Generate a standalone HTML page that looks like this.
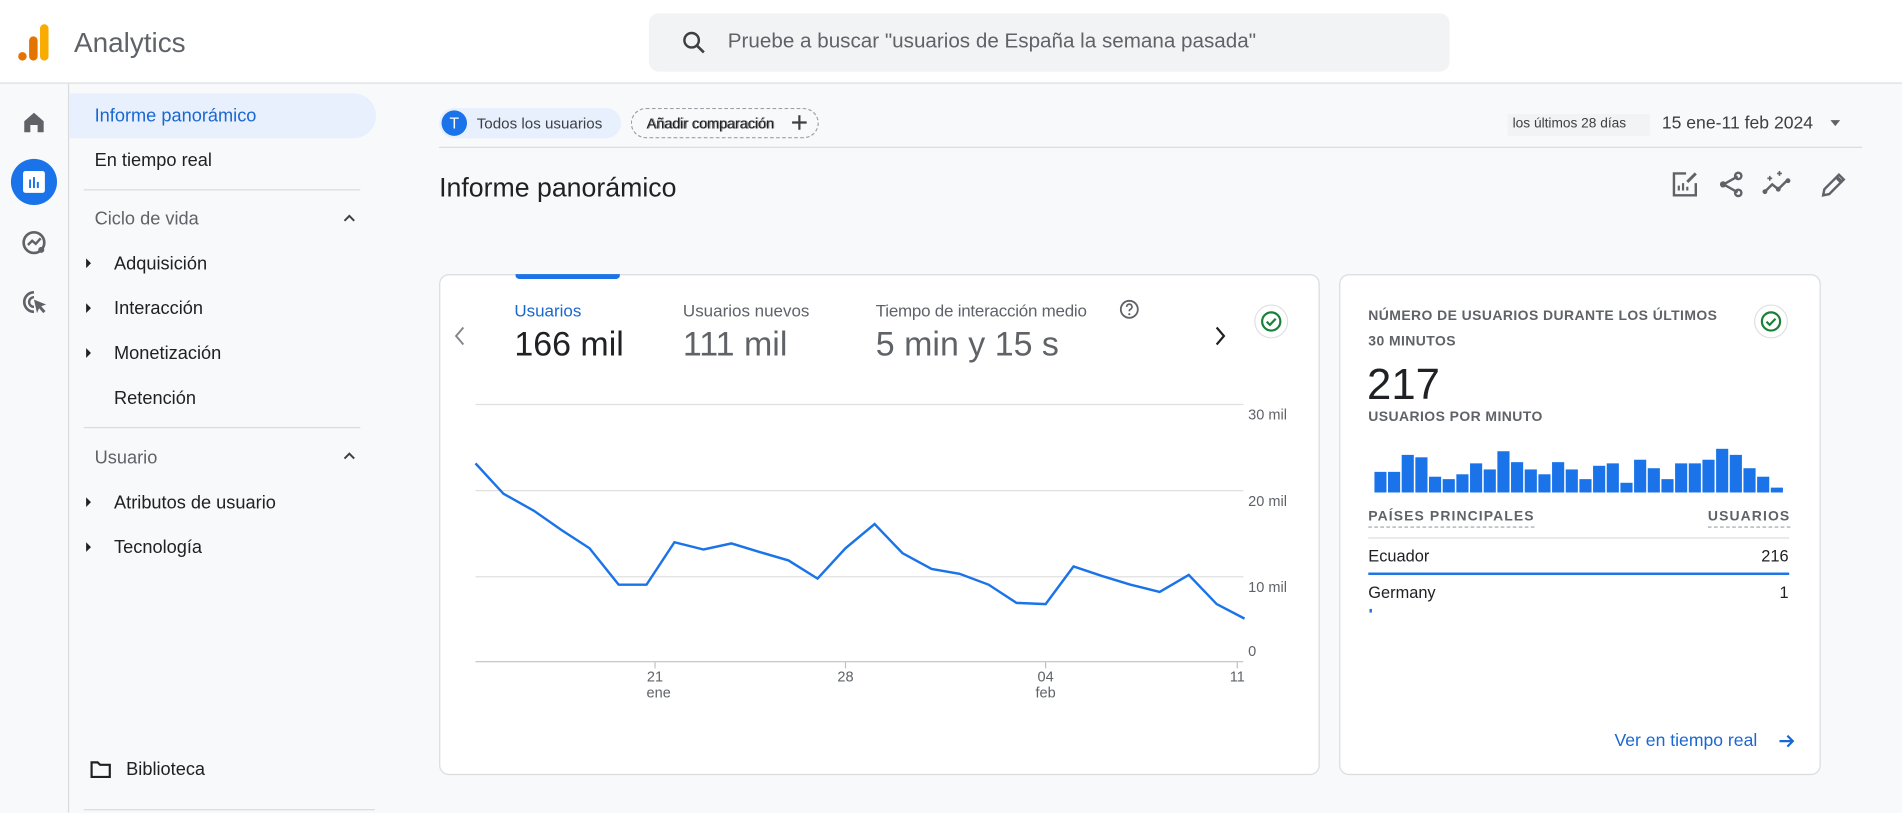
<!DOCTYPE html>
<html><head><meta charset="utf-8"><style>
html,body{margin:0;padding:0;width:1902px;height:812px;overflow:hidden;background:#f8f9fa}
#w{position:absolute;left:0;top:0;width:1568px;height:670px;transform:scale(1.21301);transform-origin:0 0;font-family:"Liberation Sans",Arial,sans-serif;color:#202124;background:#f8f9fa}
.a{position:absolute;white-space:nowrap}
.nav{font-size:15px;color:#202124}
.tri{position:absolute;width:0;height:0;border-left:4px solid #202124;border-top:4px solid transparent;border-bottom:4px solid transparent}
.cap{font-size:11.5px;letter-spacing:.35px;color:#5f6368;font-weight:bold}
</style></head><body><div id="w">
<div class="a" style="left:0;top:0;width:1568px;height:68px;background:#fff;border-bottom:1px solid #dadce0"></div>
<svg class="a" style="left:12px;top:18px" width="30" height="34" viewBox="0 0 30 34"><rect x="21" y="2" width="7" height="30" rx="3.5" fill="#f9ab00"/><rect x="12" y="12" width="7" height="20" rx="3.5" fill="#e37400"/><circle cx="6.5" cy="28.5" r="3.5" fill="#e37400"/></svg>
<div class="a" style="left:61px;top:22px;font-size:23px;color:#5f6368">Analytics</div>
<div class="a" style="left:535px;top:11px;width:660px;height:48px;background:#f1f3f4;border-radius:8px"></div>
<svg class="a" style="left:561px;top:24px" width="22" height="22" viewBox="0 0 24 24"><circle cx="10" cy="10" r="6.5" fill="none" stroke="#3c4043" stroke-width="2.2"/><path d="M15 15l6 6" stroke="#3c4043" stroke-width="2.4"/></svg>
<div class="a" style="left:600px;top:24px;font-size:17px;color:#5f6368">Pruebe a buscar "usuarios de España la semana pasada"</div>
<div class="a" style="left:56px;top:69px;width:1px;height:601px;background:#dadce0"></div>
<svg class="a" style="left:18px;top:91px" width="20" height="20" viewBox="0 0 20 20"><path d="M10 2L2 9v9h5v-6h6v6h5V9z" fill="#5f6368"/></svg>
<div class="a" style="left:9px;top:131px;width:38px;height:38px;border-radius:50%;background:#1a73e8"></div>
<svg class="a" style="left:18px;top:140px" width="20" height="20" viewBox="0 0 20 20"><rect x="1" y="1" width="18" height="18" rx="2" fill="#fff"/><rect x="6" y="8" width="1.6" height="7" fill="#1a73e8"/><rect x="9.2" y="6" width="1.6" height="9" fill="#1a73e8"/><rect x="12.4" y="10" width="1.6" height="5" fill="#1a73e8"/></svg>
<svg class="a" style="left:17px;top:189px" width="22" height="22" viewBox="0 0 22 22"><circle cx="11" cy="11" r="8.5" fill="none" stroke="#5f6368" stroke-width="2.2"/><path d="M6 13l3.5-3.5 3 2.5 4-4.5" fill="none" stroke="#5f6368" stroke-width="2"/><circle cx="17" cy="17" r="2.5" fill="#5f6368"/></svg>
<svg class="a" style="left:17px;top:238px" width="24" height="24" viewBox="0 0 24 24"><path d="M11 3a8 8 0 1 0 0 16" fill="none" stroke="#5f6368" stroke-width="2.2"/><path d="M11 7a4 4 0 1 0 0 8" fill="none" stroke="#5f6368" stroke-width="2"/><path d="M11 9l10 4-4 1.5 3.5 4-1.8 1.6-3.5-4-1.7 4z" fill="#5f6368"/></svg>
<div class="a" style="left:57px;top:77px;width:253px;height:37px;background:#e8f0fe;border-radius:0 19px 19px 0"></div>
<div class="a nav" style="left:78px;top:87px;color:#1967d2">Informe panorámico</div>
<div class="a nav" style="left:78px;top:124px">En tiempo real</div>
<div class="a" style="left:69px;top:156px;width:228px;height:1px;background:#dadce0"></div>
<div class="a nav" style="left:78px;top:172px;color:#5f6368">Ciclo de vida</div>
<svg class="a" style="left:282px;top:175px" width="12" height="10"><path d="M2 7l4-4 4 4" fill="none" stroke="#3c4043" stroke-width="1.6"/></svg>
<div class="tri" style="left:71px;top:213px"></div><div class="a nav" style="left:94px;top:209px">Adquisición</div>
<div class="tri" style="left:71px;top:250px"></div><div class="a nav" style="left:94px;top:246px">Interacción</div>
<div class="tri" style="left:71px;top:287px"></div><div class="a nav" style="left:94px;top:283px">Monetización</div>
<div class="a nav" style="left:94px;top:320px">Retención</div>
<div class="a" style="left:69px;top:352px;width:228px;height:1px;background:#dadce0"></div>
<div class="a nav" style="left:78px;top:369px;color:#5f6368">Usuario</div>
<svg class="a" style="left:282px;top:371px" width="12" height="10"><path d="M2 7l4-4 4 4" fill="none" stroke="#3c4043" stroke-width="1.6"/></svg>
<div class="tri" style="left:71px;top:410px"></div><div class="a nav" style="left:94px;top:406px">Atributos de usuario</div>
<div class="tri" style="left:71px;top:447px"></div><div class="a nav" style="left:94px;top:443px">Tecnología</div>
<svg class="a" style="left:74px;top:626px" width="18" height="16"><path d="M1.5 2.5h5l2 2h8v10h-15z" fill="none" stroke="#202124" stroke-width="1.8"/></svg>
<div class="a nav" style="left:104px;top:626px">Biblioteca</div>
<div class="a" style="left:69px;top:667px;width:240px;height:1px;background:#dadce0"></div>
<div class="a" style="left:362px;top:89px;width:150px;height:25px;border-radius:13px;background:#e8f0fe"></div>
<div class="a" style="left:364px;top:91px;width:21px;height:21px;border-radius:50%;background:#1a73e8;color:#fff;font-size:13px;text-align:center;line-height:21px">T</div>
<div class="a" style="left:393px;top:95px;font-size:12.5px;color:#3c4043">Todos los usuarios</div>
<div class="a" style="left:520px;top:89px;width:153px;height:23px;border:1px dashed #9aa0a6;border-radius:13px"></div>
<div class="a" style="left:533px;top:95px;font-size:12px;color:#202124;letter-spacing:-.1px">Añadir comparación</div>
<div class="a" style="left:534px;top:95px;font-size:12px;color:#202124;letter-spacing:-.1px;opacity:.5">Añadir comparación</div>
<svg class="a" style="left:652px;top:94px" width="14" height="14"><path d="M7 1v12M1 7h12" stroke="#3c4043" stroke-width="1.8"/></svg>
<div class="a" style="left:1243px;top:94px;width:117px;height:18px;background:#f1f3f4"></div>
<div class="a" style="left:1247px;top:96px;font-size:11.3px;color:#3c4043">los últimos 28 días</div>
<div class="a" style="left:1370px;top:94px;font-size:14.5px;color:#3c4043">15 ene-11 feb 2024</div>
<div class="a" style="left:1509px;top:99px;border-top:5px solid #5f6368;border-left:4px solid transparent;border-right:4px solid transparent"></div>
<div class="a" style="left:362px;top:121px;width:1173px;height:1px;background:#dadce0"></div>
<div class="a" style="left:362px;top:142px;font-size:22px;color:#202124">Informe panorámico</div>
<svg class="a" style="left:1377px;top:140px" width="24" height="24" viewBox="0 0 24 24"><path d="M13 3H3v18h18V11" fill="none" stroke="#5f6368" stroke-width="2"/><path d="M7 17v-4M10.5 17v-6M14 17v-3" stroke="#5f6368" stroke-width="1.8"/><path d="M14 10l7-7" stroke="#5f6368" stroke-width="2.4"/></svg>
<svg class="a" style="left:1415px;top:140px" width="24" height="24" viewBox="0 0 24 24"><path d="M17.5 5.5L6 12l11.5 6.5" fill="none" stroke="#5f6368" stroke-width="2"/><circle cx="18" cy="5" r="2.6" fill="none" stroke="#5f6368" stroke-width="2"/><circle cx="5.5" cy="12" r="2.6" fill="#5f6368"/><circle cx="18" cy="19" r="2.6" fill="none" stroke="#5f6368" stroke-width="2"/></svg>
<svg class="a" style="left:1452px;top:140px" width="26" height="24" viewBox="0 0 26 24"><path d="M3 18l6-6 5 4 7-7" fill="none" stroke="#5f6368" stroke-width="2"/><circle cx="3" cy="18" r="2" fill="#5f6368"/><circle cx="14" cy="16" r="2" fill="#5f6368"/><circle cx="22" cy="9" r="2" fill="#5f6368"/><path d="M5 7h4M7 5v4M13 3h4M15 1v4" stroke="#5f6368" stroke-width="1.3"/></svg>
<svg class="a" style="left:1500px;top:140px" width="22" height="24" viewBox="0 0 22 24"><path d="M3 21l1-5L16 4l4 4L8 20z" fill="none" stroke="#5f6368" stroke-width="2"/><path d="M14 6l4 4" stroke="#5f6368" stroke-width="3"/></svg>
<div class="a" style="left:362px;top:226px;width:724px;height:411px;background:#fff;border:1px solid #dadce0;border-radius:8px"></div>
<div class="a" style="left:425px;top:226px;width:86px;height:4px;background:#1a73e8;border-radius:0 0 3px 3px"></div>
<svg class="a" style="left:373px;top:268px" width="12" height="18"><path d="M9 2L3 9l6 7" fill="none" stroke="#80868b" stroke-width="1.6"/></svg>
<div class="a" style="left:424px;top:248px;font-size:14px;color:#1967d2">Usuarios</div>
<div class="a" style="left:424px;top:268px;font-size:28px;color:#202124">166 mil</div>
<div class="a" style="left:563px;top:248px;font-size:14px;color:#5f6368">Usuarios nuevos</div>
<div class="a" style="left:563px;top:268px;font-size:28px;color:#5f6368">111 mil</div>
<div class="a" style="left:722px;top:248px;font-size:14px;color:#5f6368;letter-spacing:-.2px">Tiempo de interacción medio</div>
<svg class="a" style="left:922px;top:246px" width="18" height="18"><circle cx="9" cy="9" r="7" fill="none" stroke="#5f6368" stroke-width="1.5"/><path d="M6.8 7a2.2 2.2 0 1 1 3 2c-.7.4-.8.8-.8 1.6" fill="none" stroke="#5f6368" stroke-width="1.4"/><circle cx="9" cy="13" r=".9" fill="#5f6368"/></svg>
<div class="a" style="left:722px;top:268px;font-size:28px;color:#5f6368">5 min y 15 s</div>
<svg class="a" style="left:1000px;top:268px" width="12" height="18"><path d="M3 2l6 7-6 7" fill="none" stroke="#202124" stroke-width="1.8"/></svg>
<div class="a" style="left:1034px;top:251px;width:26px;height:26px;border-radius:50%;border:1px solid #e0e0e0;background:#fff"></div>
<svg class="a" style="left:1038px;top:255px" width="20" height="20"><circle cx="10" cy="10" r="7.5" fill="none" stroke="#188038" stroke-width="1.8"/><path d="M6.3 10.2l2.6 2.6 4.8-5" fill="none" stroke="#188038" stroke-width="1.8"/></svg>
<svg class="a" style="left:362px;top:320px" width="724" height="270" viewBox="362 320 724 270">
<g stroke="#e0e0e0" stroke-width="1"><path d="M392 333.5H1025M392 404.5H1025M392 475.5H1025"/></g>
<path d="M392 545.5H1025" stroke="#bdc1c6"/>
<g stroke="#bdc1c6"><path d="M540 546v5M697 546v5M862 546v5M1020 546v5"/></g>
<polyline fill="none" stroke="#1a73e8" stroke-width="2" points="392,382 415,407 440,421 463,437 486,452 510,482 533,482 556,447 580,453 603,448 626,455 650,462 674,477 697,452 721,432 744,456 768,469 791,473 815,482 838,497 862,498 885,467 909,475 932,482 956,488 980,474 1003,498 1026,510"/>
<g font-family="Liberation Sans,Arial,sans-serif" font-size="12" fill="#5f6368">
<text x="1029" y="346">30 mil</text><text x="1029" y="417">20 mil</text><text x="1029" y="488">10 mil</text><text x="1029" y="541">0</text>
<text x="540" y="562" text-anchor="middle">21</text><text x="543" y="575" text-anchor="middle">ene</text>
<text x="697" y="562" text-anchor="middle">28</text>
<text x="862" y="562" text-anchor="middle">04</text><text x="862" y="575" text-anchor="middle">feb</text>
<text x="1020" y="562" text-anchor="middle">11</text></g>
</svg>
<div class="a" style="left:1104px;top:226px;width:395px;height:411px;background:#fff;border:1px solid #dadce0;border-radius:8px"></div>
<div class="a cap" style="left:1128px;top:255px">NÚMERO DE USUARIOS DURANTE LOS ÚLTIMOS</div>
<div class="a cap" style="left:1128px;top:276px">30 MINUTOS</div>
<div class="a" style="left:1446px;top:251px;width:26px;height:26px;border-radius:50%;border:1px solid #e0e0e0;background:#fff"></div>
<svg class="a" style="left:1450px;top:255px" width="20" height="20"><circle cx="10" cy="10" r="7.5" fill="none" stroke="#188038" stroke-width="1.8"/><path d="M6.3 10.2l2.6 2.6 4.8-5" fill="none" stroke="#188038" stroke-width="1.8"/></svg>
<div class="a" style="left:1127px;top:296px;font-size:36px;color:#202124">217</div>
<div class="a cap" style="left:1128px;top:338px">USUARIOS POR MINUTO</div>
<svg class="a" style="left:1133px;top:360px" width="340" height="47" id="bars"></svg>
<div class="a cap" style="left:1128px;top:420px;letter-spacing:.9px;border-bottom:1.5px dashed #9aa0a6;padding-bottom:2px">PAÍSES PRINCIPALES</div>
<div class="a cap" style="left:1408px;top:420px;letter-spacing:.9px;border-bottom:1.5px dashed #9aa0a6;padding-bottom:2px">USUARIOS</div>
<div class="a" style="left:1128px;top:443px;width:347px;height:1px;background:#dadce0"></div>
<div class="a" style="left:1128px;top:451px;font-size:13.5px;color:#202124">Ecuador</div>
<div class="a" style="left:1452px;top:451px;font-size:13.5px;color:#202124">216</div>
<div class="a" style="left:1128px;top:472px;width:347px;height:2px;background:#1a73e8"></div>
<div class="a" style="left:1128px;top:481px;font-size:13.5px;color:#202124">Germany</div>
<div class="a" style="left:1467px;top:481px;font-size:13.5px;color:#202124">1</div>
<div class="a" style="left:1129px;top:502px;width:2px;height:3px;background:#1a73e8"></div>
<div class="a" style="left:1331px;top:603px;font-size:14.5px;color:#1967d2">Ver en tiempo real</div>
<svg class="a" style="left:1465px;top:603px" width="16" height="16"><path d="M2 8h11M8.5 3.5L13 8l-4.5 4.5" fill="none" stroke="#1967d2" stroke-width="1.8"/></svg>
</div>
<script>
var h=[17,17,31,29,13,11,15,24,19,34,25,19,15,25,19,11,22,24,8,27,20,11,24,24,27,36,31,20,13,4],s='';
for(var i=0;i<30;i++){s+='<rect x="'+(i*11.27).toFixed(2)+'" y="'+(46-h[i])+'" width="10" height="'+h[i]+'" fill="#1a73e8"/>';}
document.getElementById('bars').innerHTML=s;
</script>
</body></html>
